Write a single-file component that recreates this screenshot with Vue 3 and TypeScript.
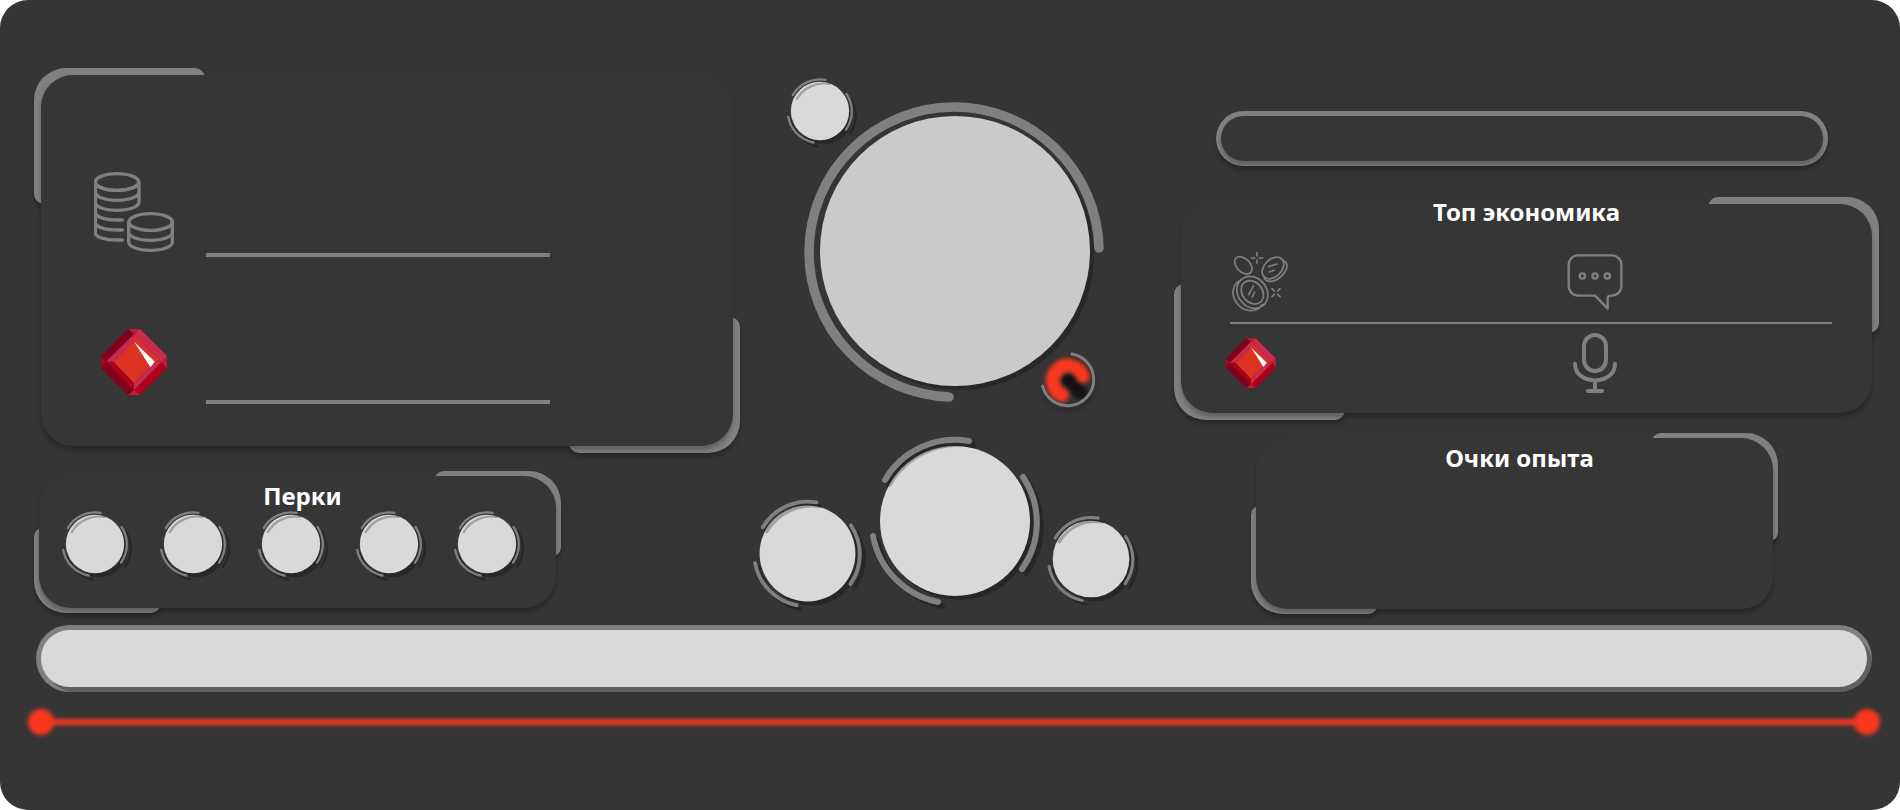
<script setup lang="ts">
import { defineComponent, h } from 'vue'

const ARCS: string[] = [
  'M-70 -41A81 81 0 0 1 14 -80',
  'M68 -44A81 81 0 0 1 67 48',
  'M-82 15A83 83 0 0 0 -17 81',
]

// Round slot with three arcs; the shadow keeps a 4px offset whatever the size.
const Dial = defineComponent({
  props: { size: { type: Number, required: true } },
  setup(props) {
    return () => {
      const offset = (4 * 180) / props.size
      const arcs = (stroke: string, opacity: number) =>
        h('g', { fill: 'none', stroke, 'stroke-width': 6, 'stroke-linecap': 'round', opacity },
          ARCS.map((d) => h('path', { d })))
      const shift = `translate(${offset} ${offset})`
      return h('svg', { width: props.size, height: props.size, viewBox: '-90 -90 180 180', overflow: 'visible', 'aria-hidden': 'true' }, [
        h('circle', { r: 75, fill: '#000', opacity: 0.25, transform: shift }),
        h('circle', { r: 75, fill: '#d9d9d9' }),
        h('g', { transform: shift }, [arcs('#000', 0.25)]),
        arcs('#808080', 1),
      ])
    }
  },
})

const Gem = defineComponent({
  props: { size: { type: Number, required: true } },
  setup(props) {
    const faces: [string, string][] = [
      ['80,0 98,15 15,98 0,80', '#83001f'],
      ['116,0 196,80 181,98 98,15', '#cb2a4d'],
      ['196,117 116,197 98,182 181,98', '#b1001a'],
      ['80,197 0,117 15,98 98,182', '#83001f'],
      ['80,0 116,0 98,15', '#b71c38'],
      ['196,80 196,117 181,98', '#c01c37'],
      ['116,197 80,197 98,182', '#c01c37'],
      ['0,117 0,80 15,98', '#b1001a'],
      ['98,15 98,37 37,98 15,98', '#cb2a4d'],
      ['98,15 181,98 159,98 98,37', '#d92f2c'],
      ['181,98 98,182 98,161 159,98', '#cb2a4d'],
      ['98,182 15,98 37,98 98,161', '#b1001a'],
      ['98,37 159,98 98,161 37,98', '#dd3322'],
      ['98,37 160,98 147,114', '#ffffff'],
    ]
    return () =>
      h('svg', { width: props.size, height: props.size, viewBox: '0 0 196 197', 'aria-hidden': 'true' },
        faces.map(([points, fill]) => h('polygon', { points, fill })))
  },
})

const perks: number[] = [1, 2, 3, 4, 5]
</script>

<template>
  <main class="card">
    <div class="columns">
      <div class="column left">
        <section class="panel large balance">
          <span class="corner tl"></span>
          <span class="corner br"></span>
          <div class="body">
            <div class="balance-row">
              <svg class="coins" viewBox="0 0 240 240" aria-hidden="true">
                <ellipse cx="69" cy="30" rx="65" ry="25" />
                <path d="M4 30V182C4 196 34 204 69 204H85M135 30V90C135 105 105 115 69 115S4 105 4 90M4 60C4 75 34 85 69 85S135 75 135 60M4 30C4 45 34 55 69 55S135 45 135 30M4 120C4 135 34 144 69 144H85M4 150C4 165 34 174 69 174H85" />
                <ellipse cx="170" cy="150" rx="65" ry="25" />
                <path d="M104 150V210C104 225 134 235 170 235S235 225 235 210V150M104 180C104 195 134 205 170 205S235 195 235 180" />
              </svg>
              <div class="rule"></div>
            </div>
            <div class="balance-row">
              <div class="icon-box"><Gem :size="66" /></div>
              <div class="rule"></div>
            </div>
          </div>
        </section>

        <section class="panel compact perks">
          <span class="corner tr"></span>
          <span class="corner bl"></span>
          <div class="body">
            <h2>Перки</h2>
            <div class="perk-row">
              <Dial v-for="perk in perks" :key="perk" :size="70" />
            </div>
          </div>
        </section>
      </div>

      <div class="column center">
        <div class="hero">
          <svg class="portrait" viewBox="-150 -150 300 300" aria-hidden="true">
            <circle cx="5" cy="3" r="135" fill="#282828" />
            <circle cx="1" cy="-1" r="135" fill="#cacaca" />
            <path d="M145 -4A145 145 0 1 0 -5 145" fill="none" stroke="#808080" stroke-width="9.500" stroke-linecap="round" />
          </svg>
          <Dial class="badge" :size="70" />
          <svg class="status" viewBox="-30 -30 60 60" aria-hidden="true">
            <path class="soft" d="M0 0L13 13" stroke="#121212" stroke-width="14" />
            <path class="soft" d="M15 -4A15.500 15.500 0 1 0 -6 15" stroke="#fa381e" stroke-width="14" />
            <path class="ring" d="M4 -26A26 26 0 1 1 -25.500 6" stroke="#808080" stroke-width="3" />
          </svg>
        </div>
        <div class="dials">
          <Dial :size="115" />
          <Dial :size="180" />
          <Dial class="raised" :size="92" />
        </div>
      </div>

      <div class="column right">
        <div class="pill"><div class="pill-inner"></div></div>

        <section class="panel large economy">
          <span class="corner tr"></span>
          <span class="corner bl"></span>
          <div class="body">
            <h2>Топ экономика</h2>
            <div class="stats">
              <div class="stat inset">
                <svg width="56" height="60" viewBox="66 36 168 180" class="line-icon thin" aria-hidden="true">
                  <ellipse cx="100" cy="76" rx="31" ry="20" transform="rotate(45 100 76)" />
                  <path d="M124 54H134M147 54H158M141 37V47M141 60V70" />
                  <ellipse cx="189" cy="84" rx="38" ry="26" transform="rotate(-45 189 84)" />
                  <path d="M221 62C239 70 230 94 214 109C196 126 172 130 163 115M176 80L201 72M178 96L192 91" />
                  <ellipse cx="127" cy="157" rx="51" ry="43" transform="rotate(50 127 157)" />
                  <path d="M92 121C66 133 62 164 80 189C101 217 139 221 158 193" />
                  <ellipse cx="127" cy="157" rx="38" ry="30" transform="rotate(50 127 157)" />
                  <path d="M130 138L116 164M134 156L127 171M186 146L193 153M203 163L210 170M210 146L203 153M193 163L186 170" />
                </svg>
              </div>
              <div class="stat">
                <svg width="56" height="56" viewBox="81 492 168 168" class="line-icon chat" aria-hidden="true">
                  <path d="M114 496H216A28 28 0 0 1 244 524V589A28 28 0 0 1 216 617H211Q203 617 203 625V656L165 617H114A28 28 0 0 1 86 589V524A28 28 0 0 1 114 496Z" />
                  <circle cx="127" cy="558" r="8" /><circle cx="165" cy="558" r="8" /><circle cx="202" cy="558" r="8" />
                </svg>
              </div>
            </div>
            <div class="divider"></div>
            <div class="stats">
              <div class="stat"><Gem :size="50" /></div>
              <div class="stat">
                <svg width="56" height="60" viewBox="81 729 168 180" class="line-icon mic" aria-hidden="true">
                  <rect x="132" y="735" width="66" height="108" rx="33" />
                  <path d="M105 821C105 888 225 888 225 821M165 872V903M144 903H186" />
                </svg>
              </div>
            </div>
          </div>
        </section>

        <section class="panel compact experience">
          <span class="corner tr"></span>
          <span class="corner bl"></span>
          <div class="body">
            <h2>Очки опыта</h2>
          </div>
        </section>
      </div>
    </div>

    <div class="bar"><div class="bar-inner"></div></div>
    <div class="track">
      <span class="knob"></span>
      <span class="track-line"></span>
      <span class="knob"></span>
    </div>
  </main>
</template>

<style>
body {
  margin: 0;
  background: #ffffff;
}
</style>

<style scoped>
* {
  box-sizing: border-box;
}

svg {
  display: block;
  flex: none;
}

.card {
  min-height: 100vh;
  padding-bottom: 40px;
  border-radius: 28px;
  background: #353535;
  font-family: 'Noto Sans', sans-serif;
  color: #ffffff;
}

.columns {
  display: grid;
  grid-template-columns: minmax(0, 1fr) 447px minmax(0, 1fr);
  padding: 0 28px 0 41px;
}

.column {
  display: flex;
  flex-direction: column;
}

.left {
  gap: 30px;
  margin-left: -2px;
  padding-top: 75px;
}

.center {
  gap: 29px;
  padding: 102px 43px 0 17px;
}

.right {
  padding-top: 111px;
}

.panel {
  position: relative;
  isolation: isolate;
}

.large {
  --corner-width: 171px;
  --corner-height: 136px;
  --corner-out: -7px;
}

.compact {
  --corner-width: 127px;
  --corner-height: 86px;
  --corner-out: -5px;
  width: 517px;
  max-width: 100%;
}

.body {
  position: relative;
  height: 100%;
  border-radius: 32px;
  background: #363636;
  box-shadow: 0 4px 4px rgba(0, 0, 0, 0.25);
}

.corner {
  position: absolute;
  width: var(--corner-width);
  height: var(--corner-height);
  background: #808080;
  box-shadow: 0 4px 4px rgba(0, 0, 0, 0.25);
}

.tl {
  top: var(--corner-out);
  left: var(--corner-out);
  border-radius: 32px 10px 10px 10px;
}

.tr {
  top: var(--corner-out);
  right: var(--corner-out);
  border-radius: 10px 32px 10px 10px;
}

.br {
  right: var(--corner-out);
  bottom: var(--corner-out);
  border-radius: 10px 10px 32px 10px;
}

.bl {
  bottom: var(--corner-out);
  left: var(--corner-out);
  border-radius: 10px 10px 10px 32px;
}

h2 {
  margin: 0;
  font-size: 24px;
  font-weight: 700;
  line-height: 16px;
  text-align: center;
  white-space: nowrap;
}

.balance {
  margin-left: 2px;
}

.balance .body {
  display: flex;
  flex-direction: column;
  gap: 72px;
  padding: 97px 42px 42px 53px;
}

.balance-row {
  display: flex;
  gap: 32px;
}

.balance-row:first-child {
  min-height: 85px;
}

.balance-row:last-child {
  min-height: 75px;
}

.rule {
  flex: 0 1 344px;
  align-self: flex-end;
  height: 4px;
  background: #808080;
}

.coins {
  width: 80px;
  height: 80px;
  fill: none;
  stroke: #808080;
  stroke-width: 10;
  stroke-linecap: round;
}

.icon-box {
  display: flex;
  justify-content: center;
  width: 80px;
}

.compact .body {
  padding: 12px 21px 29px;
}

.compact h2 {
  padding-left: 10px;
}

.perk-row {
  display: flex;
  gap: 28px;
  margin-top: 5px;
}

.hero {
  position: relative;
  width: 300px;
  margin-left: 54px;
}

.portrait {
  width: 100%;
  overflow: visible;
}

.badge {
  position: absolute;
  top: -26px;
  left: -19px;
}

.status {
  position: absolute;
  right: 6px;
  bottom: -8px;
  width: 60px;
  height: 60px;
  overflow: visible;
  fill: none;
  stroke-linecap: round;
}

.soft {
  filter: blur(2px);
}

.ring {
  filter: drop-shadow(0 4px 2px rgba(0, 0, 0, 0.25));
}

.dials {
  display: flex;
  align-items: flex-end;
}

.raised {
  margin-bottom: 6px;
}

.pill {
  margin: 0 44px 38px 36px;
  padding: 5px;
  border-radius: 28px;
  background: #808080;
  box-shadow: 0 4px 4px rgba(0, 0, 0, 0.25);
}

.pill-inner {
  height: 45px;
  border-radius: 23px;
  background: #363636;
  box-shadow: 0 4px 4px rgba(0, 0, 0, 0.25);
}

.economy {
  margin: 0 0 25px 1px;
}

.economy .body {
  padding: 0 0 20px;
}

.stats {
  display: grid;
  grid-template-columns: minmax(0, 9fr) minmax(0, 7fr);
  padding: 0 40px 0 45px;
}

h2 + .stats {
  margin-top: 32px;
}

.stat {
  display: flex;
  align-items: center;
  height: 60px;
}

.inset {
  padding-left: 6px;
}

.line-icon {
  fill: none;
  stroke: #808080;
  stroke-linecap: round;
  stroke-linejoin: round;
}

.thin {
  stroke-width: 5;
}

.chat {
  stroke-width: 7;
}

.mic {
  stroke-width: 12;
}

.divider {
  height: 2px;
  margin: 10px 40px 9px 49px;
  background: #808080;
}

.experience {
  --corner-height: 109px;
  --corner-out: -5px;
  min-height: 171px;
  margin-left: 76px;
}

.experience .body {
  min-height: 171px;
}

.bar {
  margin: 14px 28px 0 36px;
  padding: 5px;
  border-radius: 34px;
  background: #808080;
  overflow: hidden;
}

.bar-inner {
  height: 57px;
  border-radius: 29px;
  background: #d9d9d9;
  box-shadow: 5px 5px 0 rgba(0, 0, 0, 0.25);
}

.track {
  display: flex;
  align-items: center;
  margin: 17px 20px 0 28px;
}

.knob {
  flex: none;
  width: 26px;
  height: 26px;
  border-radius: 50%;
  background: #fa381e;
  filter: blur(2px);
}

.track-line {
  flex: 1;
  height: 6px;
  margin: 0 -4px;
  background: #fa381e;
  filter: blur(2px);
}
</style>
